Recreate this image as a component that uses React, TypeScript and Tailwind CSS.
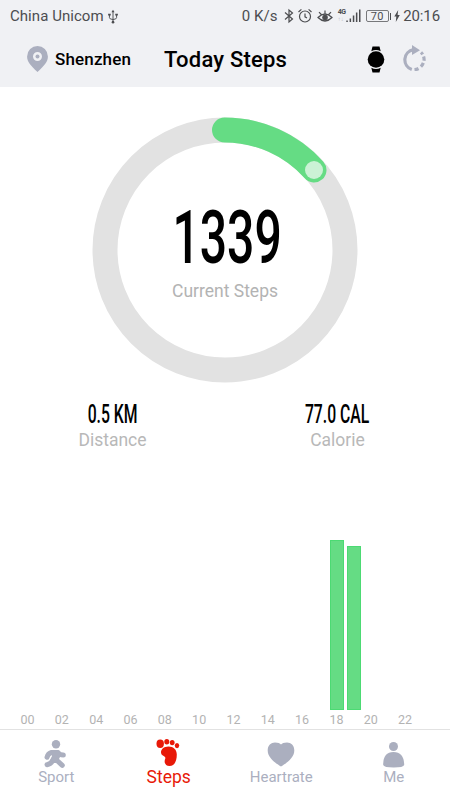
import type { ReactNode } from "react";

const hours = Array.from({ length: 24 }, (_, h) => ({
  hour: h,
  value: h === 18 ? 170 : h === 19 ? 164 : 0,
}));

function StatusBar() {
  return (
    <div className="flex h-8 items-center pl-[10px] pr-[10px] text-[15px] leading-8 text-[#4c4d50]">
      <span className="w-[97px] whitespace-nowrap tracking-[0.05px]">China Unicom</span>
      <svg className="h-[15px] w-3" viewBox="0 0 12 16" fill="none" stroke="currentColor" strokeWidth="1">
        <path d="M6 2v12M2.2 6v3.2Q2.2 11 6 11.2Q9.8 11 9.8 9.2V6" />
        <path d="M6 .8 4.4 3.4h3.2Z" fill="currentColor" stroke="none" />
        <circle cx="6" cy="14" r="1.4" fill="currentColor" stroke="none" />
        <path d="M.8 5h2.8v2H.8zM8.4 5h2.8v2H8.4z" fill="currentColor" stroke="none" />
      </svg>
      <span className="ml-auto whitespace-nowrap tracking-[0.1px]">0 K/s</span>
      <svg className="ml-[6px] h-4 w-[10px]" viewBox="0 0 10 16" fill="none" stroke="currentColor" strokeWidth="1.2">
        <path d="M1 4.5 8.5 11 5 14V2l3.500 3L1 11.500" />
      </svg>
      <svg className="ml-[4px] h-4 w-[14px]" viewBox="0 0 14 16" fill="none" stroke="currentColor" strokeWidth="1.2">
        <circle cx="7" cy="8.5" r="5.5" />
        <path d="M7 5.500v3.300l2 1.200M.5 4 3.400 1.400M13.500 4 10.600 1.400" />
      </svg>
      <svg className="ml-[5px] h-4 w-4" viewBox="0 0 16 16" fill="none" stroke="currentColor" strokeWidth="1.2">
        <path d="M1 9.500Q8 2.500 15 9.500Q8 16.500 1 9.500ZM8 5.500V2.500M4.300 6.500 2 4.200M11.700 6.500 14 4.200" />
        <circle cx="8" cy="9.500" r="2.200" fill="currentColor" />
      </svg>
      <div className="ml-[5px] flex h-[14px] items-end">
        <div className="flex h-full w-[8px] flex-col">
          <span className="text-[7px] font-bold leading-[7px] tracking-[-0.5px]">4G</span>
          <span className="text-[6px] leading-[6px] text-[#c0c1c4]">↑↓</span>
        </div>
        <svg className="h-[14px] w-[15px]" viewBox="0 0 15 14" fill="currentColor">
          <path d="M.3 11.500h1.500V13H.3zM3.600 9.500h1.500V13H3.600zM6.800 6.500h1.500V13H6.800zM9.900 3.500h1.500V13H9.900zM13 .5h1.500V13H13z" />
        </svg>
      </div>
      <div className="ml-[5px] flex h-[12px] w-[23px] items-center justify-center rounded-[2px] border border-[#77787b] text-[11px] leading-none tracking-[0.2px]">70</div>
      <div className="ml-px h-[7px] w-[1.500px] bg-[#4c4d50]" />
      <svg className="ml-[3px] h-[12px] w-[6px]" viewBox="0 0 6 12" fill="currentColor">
        <path d="M4.200 0 .3 6.600h2L1.800 12l4-7H3.600Z" />
      </svg>
      <span className="ml-[3px] whitespace-nowrap tracking-[-0.1px]">20:16</span>
    </div>
  );
}

function Header() {
  return (
    <div className="flex h-[55px] items-center pl-[27px] pr-6 text-black">
      <svg className="mb-[2px] h-[26px] w-[21px]" viewBox="0 0 21 26">
        <path fill="#abafbf" fillRule="evenodd" d="M10.500 0A10.400 10.400 0 0 0 .1 10.400C.1 16 3.500 19 10.500 26C17.500 19 20.900 16 20.900 10.400A10.400 10.400 0 0 0 10.500 0ZM10.500 6a4.500 4.500 0 1 1 0 9a4.500 4.500 0 1 1 0-9Z" />
        <circle cx="10.500" cy="10.500" r="2" fill="#abafbf" />
      </svg>
      <span className="ml-[7px] w-[109px] whitespace-nowrap text-[17px] font-medium tracking-[0.15px]">Shenzhen</span>
      <h1 className="whitespace-nowrap text-[22px] font-medium tracking-[0.2px]">Today Steps</h1>
      <svg className="mb-[1px] ml-auto h-[27px] w-[18px]" viewBox="0 0 18 27">
        <path d="M5.500 .5h7l1.200 4.800Q9 2.800 4.300 5.300ZM4.300 21.700Q9 24.200 13.700 21.700L12.500 26.500h-7Z" />
        <circle cx="9" cy="13.500" r="8.300" />
      </svg>
      <svg className="mb-[3px] ml-[17px] h-[26px] w-6" viewBox="0 0 24 26" fill="none" stroke="#abafbf" strokeWidth="3.200">
        <path d="M11.500 4.600A10.300 10.300 0 0 0 9.800 24.500" />
        <path d="M10 0 18 5.300 10 10Z" fill="#abafbf" stroke="none" />
        <path d="M12.500 24.700A10.300 10.300 0 0 0 16.500 23.500M18.900 21.600A10.300 10.300 0 0 0 21.300 17.900M22 15.800A10.300 10.300 0 0 0 21.600 11.400M20.700 9.400A10.300 10.300 0 0 0 19 7.300" />
      </svg>
    </div>
  );
}

function Ring() {
  return (
    <div className="relative mx-auto mt-[30px] h-[266px] w-[266px] shrink-0">
      <svg className="h-full w-full" viewBox="0 0 266 266" fill="none">
        <circle cx="133" cy="133" r="120" stroke="#e2e2e2" strokeWidth="25" />
        <path d="M132.500 13A120 120 0 0 1 222 53" stroke="#65dc84" strokeWidth="25" strokeLinecap="round" />
        <circle cx="222" cy="53" r="9" fill="#cbf2d5" />
      </svg>
      <div className="absolute inset-0 flex flex-col items-center pt-[91px]">
        <div className="flex h-[60px] items-center whitespace-nowrap text-[74px] font-medium leading-[60px] text-black">
          <span className="ml-[4px] block origin-center scale-x-[0.65]">1339</span>
        </div>
        <span className="mt-[11px] text-[17.500px] leading-6 text-[#b3b3b3]">Current Steps</span>
      </div>
    </div>
  );
}

function Stat({ value, label }: { value: string; label: string }) {
  return (
    <div className="flex w-[225px] flex-col items-center">
      <span className="block h-[26px] origin-center scale-x-[0.63] whitespace-nowrap pt-px text-[25px] font-medium leading-[26px] text-black">{value}</span>
      <span className="text-[17.500px] leading-[26px] text-[#b8b8b8]">{label}</span>
    </div>
  );
}

function HourChart() {
  return (
    <div className="ml-[20px] w-[412px] shrink-0">
      <div className="flex h-[171px] items-end">
        {hours.map(h => (
          <div key={h.hour} className="flex-1">
            {h.value > 0 && (
              <div className="ml-[1px] w-[14px] border border-[#4cda73] bg-[#65dc84]" style={{ height: h.value }} />
            )}
          </div>
        ))}
      </div>
      <div className="flex h-[19px] text-[12.500px] leading-[20px] text-[#b3b3b3]">
        {hours.filter(h => h.hour % 2 === 0).map(h => (
          <div key={h.hour} className="flex-1">
            <span className="block w-[15px] text-center">{String(h.hour).padStart(2, "0")}</span>
          </div>
        ))}
      </div>
    </div>
  );
}

function Tab({ label, active, children }: { label: string; active?: boolean; children: ReactNode }) {
  return (
    <div className={`flex flex-1 flex-col items-center pt-[8px] ${active ? "text-[#e81908]" : "text-[#abafbf]"}`}>
      <svg className="h-[30px] w-[30px]" viewBox="0 0 30 30" fill="currentColor">{children}</svg>
      <span className={`leading-[19px] ${active ? "text-[17.500px]" : "text-[15px]"}`}>{label}</span>
    </div>
  );
}

export default function App() {
  return (
    <div className="flex h-[800px] w-[450px] flex-col overflow-hidden bg-white font-['Roboto',sans-serif]">
      <div className="h-[87px] shrink-0 bg-[#f0f1f4]">
        <StatusBar />
        <Header />
      </div>
      <Ring />
      <div className="mt-[18px] flex h-[138px] shrink-0">
        <Stat value="0.5 KM" label="Distance" />
        <Stat value="77.0 CAL" label="Calorie" />
      </div>
      <HourChart />
      <div className="mt-auto flex h-[71px] shrink-0 border-t border-[#e2e2e2]">
        <Tab label="Sport">
          <circle cx="15" cy="6.300" r="4.200" />
          <path d="M6 19.300Q7 15.500 10.500 14.500L17 14.500Q18.500 17 22.300 17M6 26.700Q10.500 26 12 21.500M15 21.500 21.300 27.300" fill="none" stroke="currentColor" strokeWidth="5" strokeLinecap="round" strokeLinejoin="round" />
          <path d="M10.500 12.500H17.500L20 17L17.500 22L16 25L12.500 25L9.500 22L11 18Z" />
        </Tab>
        <Tab label="Steps" active>
          <ellipse cx="6.200" cy="5.800" rx="3.700" ry="4.200" />
          <ellipse cx="12.800" cy="3.800" rx="2.500" ry="2.700" />
          <ellipse cx="18.200" cy="4.600" rx="2.400" ry="2.700" />
          <ellipse cx="23" cy="7.600" rx="2.200" ry="2.600" />
          <path d="M14.500 8.400C9.500 8.400 6.800 11.500 7 14.500C7.300 18.700 12 17.500 11.300 20.500C9.500 24.500 11.500 28 15.500 28C20.500 28 22.800 23 22.800 16.500C22.800 11.500 19.500 8.400 14.500 8.400Z" />
        </Tab>
        <Tab label="Heartrate">
          <path d="M15 28.500C11 26 1.700 20.500 1.700 12.500C1.700 7.500 5 4.600 9 4.600C12 4.600 14 5.500 15 6.500C16 5.500 18 4.600 21 4.600C25 4.600 28.300 7.500 28.300 12.500C28.300 20.500 19 26 15 28.500Z" />
        </Tab>
        <Tab label="Me">
          <circle cx="14.500" cy="8.500" r="4.500" />
          <path d="M4.200 27Q4 14 14.500 14Q25 14 25.200 27Q24.500 29.500 14.700 29.500Q5 29.500 4.200 27Z" />
        </Tab>
      </div>
    </div>
  );
}
